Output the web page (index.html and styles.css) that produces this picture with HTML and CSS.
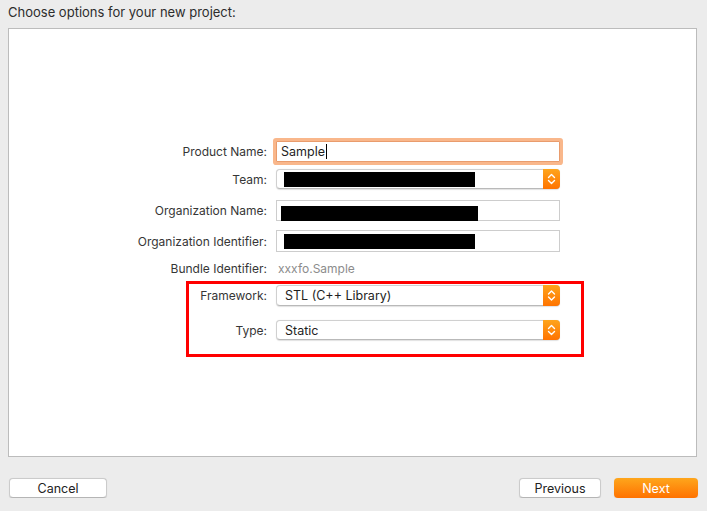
FILE: index.html
```html
<!DOCTYPE html>
<html lang="en">
<head>
    <meta charset="UTF-8">
    <title>New Project</title>
    <link rel="stylesheet" href="styles.css">
</head>
<body>
    <h1 class="title">Choose options for your new project:</h1>

    <div class="panel">
        <div class="form">
            <div class="row row-product">
                <label>Product Name:</label>
                <div class="field text focused">Sample<span class="caret"></span></div>
            </div>

            <div class="row row-team">
                <label>Team:</label>
                <div class="field popup">
                    <span class="redact redact-team"></span>
                    <span class="stepper">
                        <svg width="17" height="20" viewBox="0 0 17 20"><path d="M5.5 8.5 L8.5 5.5 L11.5 8.5 M5.5 11.5 L8.5 14.5 L11.5 11.5" fill="none" stroke="#fff" stroke-width="1.4" stroke-linecap="round" stroke-linejoin="round"/></svg>
                    </span>
                </div>
            </div>

            <div class="row row-org">
                <label>Organization Name:</label>
                <div class="field text"><span class="redact redact-org"></span></div>
            </div>

            <div class="row row-orgid">
                <label>Organization Identifier:</label>
                <div class="field text"><span class="redact redact-orgid"></span></div>
            </div>

            <div class="row row-bundle">
                <label>Bundle Identifier:</label>
                <div class="field value">xxxfo.Sample</div>
            </div>

            <!-- framework + type, boxed in red -->
            <div class="group">
                <div class="row row-framework">
                    <label>Framework:</label>
                    <div class="field popup">
                        STL (C++ Library)
                        <span class="stepper">
                            <svg width="17" height="21" viewBox="0 0 17 21"><path d="M5.5 9 L8.5 6 L11.5 9 M5.5 12 L8.5 15 L11.5 12" fill="none" stroke="#fff" stroke-width="1.4" stroke-linecap="round" stroke-linejoin="round"/></svg>
                        </span>
                    </div>
                </div>

                <div class="row row-type">
                    <label>Type:</label>
                    <div class="field popup">
                        Static
                        <span class="stepper">
                            <svg width="17" height="20" viewBox="0 0 17 20"><path d="M5.5 8.5 L8.5 5.5 L11.5 8.5 M5.5 11.5 L8.5 14.5 L11.5 11.5" fill="none" stroke="#fff" stroke-width="1.4" stroke-linecap="round" stroke-linejoin="round"/></svg>
                        </span>
                    </div>
                </div>
            </div>
        </div>
    </div>

    <div class="footer">
        <button class="btn btn-cancel">Cancel</button>
        <div class="nav">
            <button class="btn btn-prev">Previous</button>
            <button class="btn btn-next">Next</button>
        </div>
    </div>
</body>
</html>
```

FILE: styles.css
```css
/* System-ish font, light window chrome */
body {
    margin: 0;
    background-color: #ececec;
    font-family: Inter, "Liberation Sans", Arial, sans-serif;
    font-size: 12px;
    color: #2c2c2c;
    overflow: hidden;
}

.title {
    margin: 0;
    padding: 4px 8px 0;
    height: 24px;
    font-size: 13px;
    font-weight: 400;
    line-height: 16px;
    color: #2c2c2c;
}

.panel {
    box-sizing: border-box;
    margin-left: 8px;
    width: 689px;
    height: 429px;
    padding-top: 112px;
    background-color: #ffffff;
    border: 1px solid #bcbcbc;
}

.form {
    margin-left: 111px;
}

.row {
    display: flex;
    align-items: center;
}

.row label {
    width: 147px;
    margin-right: 9px;
    text-align: right;
    color: #363636;
}

.field {
    position: relative;
    box-sizing: border-box;
    width: 284px;
    display: flex;
    align-items: center;
}

/* text fields */
.text {
    height: 21px;
    padding-left: 4px;
    border: 1px solid #cdcdcd;
    background: #fff;
}

.text.focused {
    border-color: #e99c6d;
    border-radius: 1px;
    box-shadow: 0 0 0 3px #f9b78b;
    color: #1e1e1e;
    font-size: 12.5px;
}

.caret {
    display: inline-block;
    width: 1px;
    height: 15px;
    margin-left: 1px;
    background: #000;
}

/* popup buttons */
.popup {
    height: 20px;
    padding-left: 8px;
    background: #fff;
    border: 1px solid #d0d0d0;
    border-bottom-color: #b9b9b9;
    border-radius: 4px;
    box-shadow: 0 0.5px 1px rgba(0, 0, 0, 0.12);
    color: #1e1e1e;
    font-size: 12.5px;
}

.stepper {
    position: absolute;
    top: -1px;
    right: -1px;
    bottom: -1px;
    width: 17px;
    display: flex;
    align-items: center;
    justify-content: center;
    border-radius: 0 4px 4px 0;
    background: linear-gradient(#fea51c, #ff7300);
}

.value {
    padding-left: 2px;
    color: #8c8c8c;
}

.redact {
    display: inline-block;
    height: 15px;
    background: #000;
}

.redact-team {
    width: 191px;
    margin-left: -1px;
}

.redact-org {
    width: 197px;
    margin-top: 5px;
}

.redact-orgid {
    width: 191px;
    margin-left: 3px;
}

/* row spacing */
.row-product { height: 21px; }
.row-team { margin-top: 7px; }
.row-org { margin-top: 11px; }
.row-orgid { margin-top: 9px; }
.row-orgid .text { height: 22px; }
.row-bundle { margin-top: 8px; height: 16px; }
.row-framework .popup { height: 21px; }
.row-type { margin-top: 14px; }

.group {
    position: relative;
    margin-top: 9px;
}

/* red highlight drawn over the two rows */
.group::after {
    content: "";
    position: absolute;
    left: 66px;
    top: -4px;
    width: 392px;
    height: 70px;
    border: 3px solid #ff0000;
    pointer-events: none;
}

.footer {
    display: flex;
    justify-content: space-between;
    padding: 21px 9px 0;
}

.nav {
    display: flex;
    gap: 13px;
}

.btn {
    box-sizing: border-box;
    height: 20px;
    padding: 0;
    font-family: inherit;
    font-size: 12.5px;
    color: #222;
    background: #fff;
    border: 1px solid #cbcbcb;
    border-bottom-color: #b5b5b5;
    border-radius: 4px;
    box-shadow: 0 0.5px 1px rgba(0, 0, 0, 0.1);
}

.btn-cancel { width: 98px; }
.btn-prev { width: 82px; }

.btn-next {
    width: 84px;
    color: #fff;
    border: none;
    background: linear-gradient(#fea61c, #ff7200);
}
```
